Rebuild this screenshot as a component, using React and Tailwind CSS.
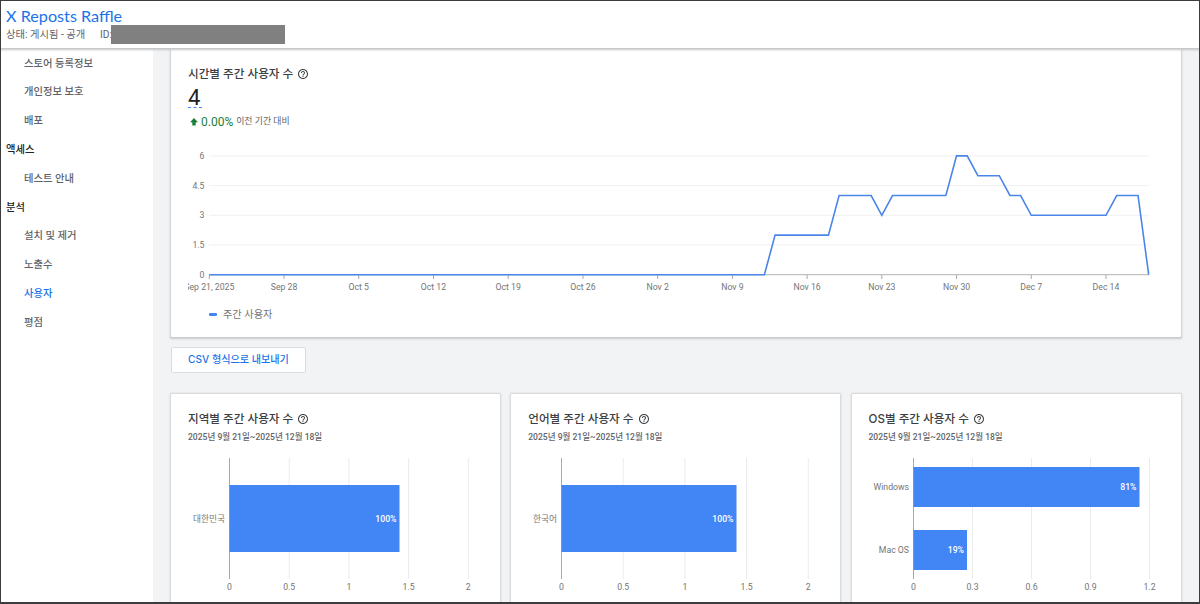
import React from 'react';

const navItems = [
  { label: '스토어 등록정보' },
  { label: '개인정보 보호' },
  { label: '배포' },
  { label: '액세스', heading: true },
  { label: '테스트 안내' },
  { label: '분석', heading: true },
  { label: '설치 및 제거' },
  { label: '노출수' },
  { label: '사용자', active: true },
  { label: '평점' },
];

const weekLabels = [
  'Sep 21, 2025', 'Sep 28', 'Oct 5', 'Oct 12', 'Oct 19', 'Oct 26', 'Nov 2',
  'Nov 9', 'Nov 16', 'Nov 23', 'Nov 30', 'Dec 7', 'Dec 14',
];

// [day since Sep 21, weekly users]
const weeklyUsers = [
  [0, 0], [52, 0], [53, 2], [58, 2], [59, 4], [62, 4], [63, 3], [64, 4], [69, 4],
  [70, 6], [71, 6], [72, 5], [74, 5], [75, 4], [76, 4], [77, 3], [84, 3],
  [85, 4], [87, 4], [88, 0],
];

const barCharts = [
  {
    title: '지역별 주간 사용자 수',
    axis: 41.5,
    step: 59.7,
    ticks: ['0', '0.5', '1', '1.5', '2'],
    bars: [{ label: '대한민국', value: '100%', y: 27, height: 67, width: 170 }],
  },
  {
    title: '언어별 주간 사용자 수',
    axis: 33.5,
    step: 61.7,
    ticks: ['0', '0.5', '1', '1.5', '2'],
    bars: [{ label: '한국어', value: '100%', y: 27, height: 67, width: 175 }],
  },
  {
    title: 'OS별 주간 사용자 수',
    axis: 44.5,
    step: 59,
    ticks: ['0', '0.3', '0.6', '0.9', '1.2'],
    bars: [
      { label: 'Windows', value: '81%', y: 9, height: 40, width: 226 },
      { label: 'Mac OS', value: '19%', y: 72, height: 40, width: 53.5 },
    ],
  },
];

function HelpIcon() {
  return (
    <svg width="12" height="12" viewBox="0 0 24 24" fill="#3c4043" aria-hidden="true">
      <path d="M11 18h2v-2h-2v2zm1-16C6.48 2 2 6.48 2 12s4.48 10 10 10 10-4.48 10-10S17.52 2 12 2zm0 18c-4.41 0-8-3.59-8-8s3.59-8 8-8 8 3.59 8 8-3.59 8-8 8zm0-14c-2.21 0-4 1.79-4 4h2c0-1.1.9-2 2-2s2 .9 2 2c0 2-3 1.75-3 5h2c0-2.25 3-2.5 3-5 0-2.21-1.79-4-4-4z" />
    </svg>
  );
}

function CardTitle({ children }) {
  return (
    <div className="flex h-4 items-center gap-[4px]">
      <h2 className="font-[Inter,'Noto_Sans_CJK_KR',sans-serif] text-[11.6px] leading-4 font-medium whitespace-nowrap text-[#3c4043]">
        {children}
      </h2>
      <HelpIcon />
    </div>
  );
}

function LineChart() {
  const x = (day) => 21.3 + day * 10.675;
  const y = (users) => 128.7 - users * 19.8;

  return (
    <svg width="970" height="150" className="block text-[8.7px]" fill="#757575">
      {[6, 4.5, 3, 1.5, 0].map((v) => (
        <g key={v}>
          <line x1="21" x2="961" y1={y(v)} y2={y(v)} stroke={v === 0 ? '#b3b3b3' : '#f1f1f1'} />
          <text x="16.5" y={y(v) + 3} textAnchor="end">{v}</text>
        </g>
      ))}
      {weekLabels.map((label, i) => (
        <g key={label}>
          <line x1={x(i * 7)} x2={x(i * 7)} y1="129" y2="133" stroke="#a8a8a8" />
          <text x={x(i * 7)} y="144" textAnchor="middle">{label}</text>
        </g>
      ))}
      <polyline
        points={weeklyUsers.map(([day, users]) => `${x(day)},${y(users)}`).join(' ')}
        fill="none"
        stroke="#4a86e8"
        strokeWidth="1.6"
      />
    </svg>
  );
}

function BarChart({ axis, step, ticks, bars }) {
  return (
    <svg width="310" height="138" className="block text-[8.7px]" fill="#757575">
      {ticks.map((tick, i) => (
        <g key={tick}>
          <line
            x1={axis + i * step}
            x2={axis + i * step}
            y1="0"
            y2="121"
            stroke={i === 0 ? '#a8a8a8' : '#ebebeb'}
          />
          <text x={axis + i * step} y="132" textAnchor="middle">{tick}</text>
        </g>
      ))}
      {bars.map((bar) => (
        <g key={bar.label}>
          <rect x={axis} y={bar.y} width={bar.width} height={bar.height} rx="0.5" fill="#4285f4" />
          <text x={axis - 4.5} y={bar.y + bar.height / 2 + 3} textAnchor="end">{bar.label}</text>
          <text
            x={axis + bar.width - 3}
            y={bar.y + bar.height / 2 + 3}
            textAnchor="end"
            fill="#fff"
            className="font-medium"
          >
            {bar.value}
          </text>
        </g>
      ))}
    </svg>
  );
}

function BarCard({ title, ...chart }) {
  return (
    <section className="h-[220px] min-w-0 flex-1 overflow-hidden rounded-t-[1px] bg-white pt-[17px] pl-[17px] shadow-[0_0_2px_0.5px_#d0d2d5]">
      <CardTitle>{title}</CardTitle>
      <p className="mt-[3px] mb-[14px] text-[8.55px] leading-[14px] font-medium text-[#5f6368]">
        2025년 9월 21일~2025년 12월 18일
      </p>
      <BarChart {...chart} />
    </section>
  );
}

export default function App() {
  return (
    <div className="flex h-[604px] w-[1200px] flex-col overflow-hidden border border-b-2 border-[#3c3c3f] bg-white font-[Roboto,'Noto_Sans_CJK_KR',sans-serif]">
      <header className="z-10 h-[47px] shrink-0 bg-white pl-[5px] pt-[6px] shadow-[0_1px_2px_1px_#c4c6c8]">
        <h1 className="font-[Lato,sans-serif] text-[16.2px] leading-[17px] text-[#1a73e8]">X Reposts Raffle</h1>
        <div className="flex h-[20px] items-center text-[10.3px] leading-[19px] text-[#5f6368]">
          <span className="w-[94px] whitespace-nowrap">상태: 게시됨 - 공개</span>
          <span className="w-[11px] whitespace-nowrap">ID:</span>
          <span className="h-[19px] w-[174px] bg-[#808080]" />
        </div>
      </header>

      <div className="flex min-h-0 flex-1">
        <nav className="w-[152px] shrink-0 bg-white pt-[1px]">
          {navItems.map(({ label, heading, active }) => (
            <a
              key={label}
              className={`flex h-[28.8px] items-center text-[10.3px] font-medium ${
                heading ? 'pl-[5px] text-[#202124]' : 'pl-[23px]'
              } ${active ? 'text-[#1a73e8]' : ''} ${!heading && !active ? 'text-[#5f6368]' : ''}`}
            >
              {label}
            </a>
          ))}
        </nav>

        <main className="flex min-w-0 flex-1 flex-col bg-[#f1f3f4] pr-[18.5px] pl-[18px]">
          <section className="h-[289px] shrink-0 rounded-b-[1px] bg-white pt-[18px] pl-[17px] shadow-[0_1px_2px_0.5px_#c8cacd]">
            <CardTitle>시간별 주간 사용자 수</CardTitle>
            <div className="mt-[7px] h-[19px] w-[14px] border-b border-dashed border-[#4285f4] text-[22px] leading-[18px] text-[#202124]">
              4
            </div>
            <div className="mt-[5px] flex h-[18px] items-center pl-[2px]">
              <svg width="8" height="8" viewBox="0 0 8 8" fill="#188038">
                <path d="M4 0L8 4.3H5.7V7.5H2.3V4.3H0z" />
              </svg>
              <span className="ml-[3px] text-[12px] text-[#188038]">0.00%</span>
              <span className="ml-[3px] text-[8.9px] text-[#5f6368]">이전 기간 대비</span>
            </div>
            <div className="mt-[15px]">
              <LineChart />
            </div>
            <div className="mt-[9px] flex h-[18px] items-center gap-[6px] pl-[21px]">
              <span className="h-[3px] w-[8px] rounded-[1px] bg-[#4285f4]" />
              <span className="pt-[1px] text-[10.2px] text-[#757575]">주간 사용자</span>
            </div>
          </section>

          <button className="mt-[10px] h-[26px] w-[135px] shrink-0 rounded-[2px] border border-[#dadce0] bg-white font-[Inter,'Noto_Sans_CJK_KR',sans-serif] text-[10.1px] font-medium text-[#1a73e8]">
            CSV 형식으로 내보내기
          </button>

          <div className="mt-[21px] flex gap-[11.25px]">
            {barCharts.map((chart) => (
              <BarCard key={chart.title} {...chart} />
            ))}
          </div>
        </main>
      </div>
    </div>
  );
}
